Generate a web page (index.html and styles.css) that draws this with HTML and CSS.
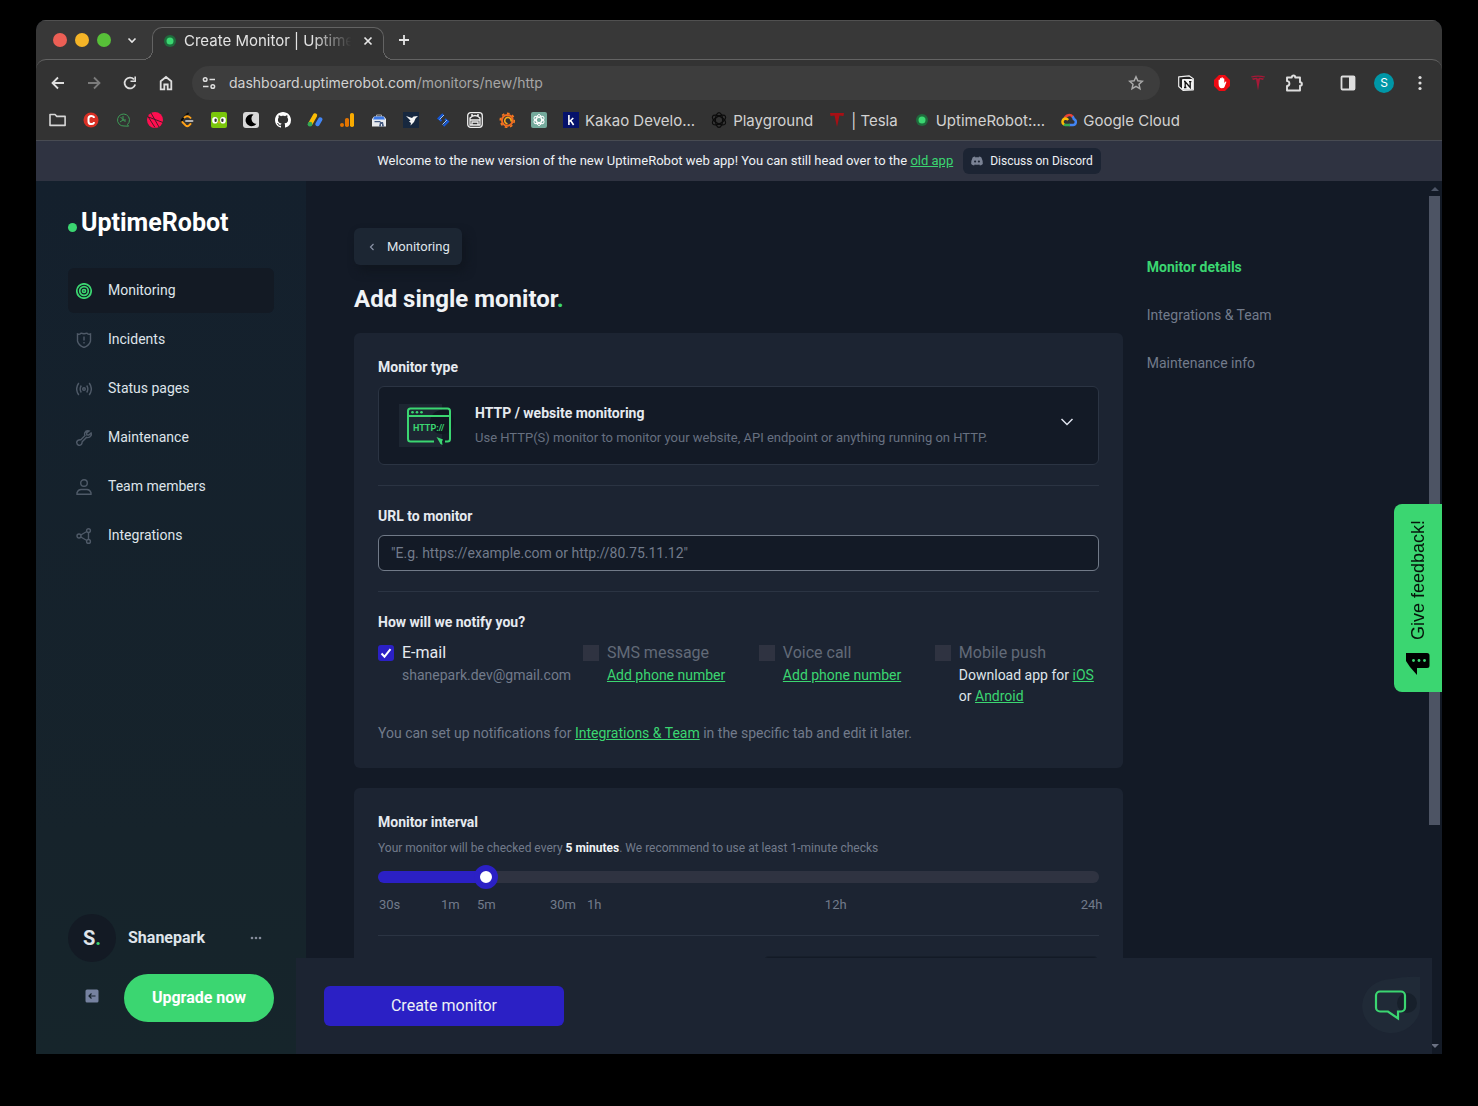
FILE: index.html
```html
<!DOCTYPE html>
<html lang="en">
<head>
<meta charset="utf-8">
<meta name="viewport" content="width=device-width, initial-scale=1">
<title>Create Monitor | UptimeRobot</title>
<link rel="stylesheet" href="styles.css">
</head>
<body>
<div class="window">
  <header class="chrome">
    <div class="tabstrip">
      <div class="lights"><span class="light light-red"></span><span class="light light-yellow"></span><span class="light light-green"></span></div>
      <button class="icon-btn tab-search" aria-label="Search tabs"><svg width="12" height="12" viewBox="0 0 12 12"><path d="M2.500 4.500 6 8l3.500-3.500" fill="none" stroke="#e6e6e6" stroke-width="1.600"/></svg></button>
      <div class="tab">
        <svg width="16" height="16" viewBox="0 0 16 16"><circle cx="8" cy="8" r="6" fill="#1f6b3c"/><circle cx="8" cy="8" r="3.500" fill="#3bd671"/></svg>
        <span class="tab-title">Create Monitor | Uptime</span>
        <button class="icon-btn tab-close" aria-label="Close tab"><svg width="12" height="12" viewBox="0 0 12 12"><path d="M2.500 2.500l7 7m0-7l-7 7" stroke="#e6e6e6" stroke-width="1.700"/></svg></button>
      </div>
      <button class="icon-btn new-tab" aria-label="New tab"><svg width="14" height="14" viewBox="0 0 14 14"><path d="M7 2v10M2 7h10" stroke="#e6e6e6" stroke-width="1.800"/></svg></button>
    </div>

    <div class="toolbar">
      <button class="icon-btn slot" aria-label="Back"><svg width="16" height="16" viewBox="0 0 16 16"><path d="M14 8H3M8 2.500 2.500 8 8 13.500" fill="none" stroke="#dedede" stroke-width="1.800"/></svg></button>
      <button class="icon-btn slot" aria-label="Forward"><svg width="16" height="16" viewBox="0 0 16 16"><path d="M2 8h11M8 2.500 13.500 8 8 13.500" fill="none" stroke="#7b7b7b" stroke-width="1.800"/></svg></button>
      <button class="icon-btn slot" aria-label="Reload"><svg width="16" height="16" viewBox="0 0 16 16"><path d="M13.200 9.500A5.400 5.400 0 1 1 12 4.400" fill="none" stroke="#dedede" stroke-width="1.800"/><path d="M14 1.500V7H8.500V5.400h3.900V1.500z" fill="#dedede"/></svg></button>
      <button class="icon-btn slot" aria-label="Home"><svg width="16" height="16" viewBox="0 0 16 16"><path d="M2.700 6.200 8 2l5.300 4.200v8.100H9.700V9.500H6.300v4.800H2.700z" fill="none" stroke="#dedede" stroke-width="1.800"/></svg></button>
      <div class="omnibox">
        <svg width="14" height="14" viewBox="0 0 14 14" fill="none" stroke="#dedede" stroke-width="1.500"><circle cx="3.200" cy="3.500" r="1.800"/><path d="M7.500 3.500H13M1 10.500h5.500"/><circle cx="10.800" cy="10.500" r="1.800"/></svg>
        <span class="url">dashboard.uptimerobot.com<span class="url-path">/monitors/new/http</span></span>
        <svg width="16" height="16" viewBox="0 0 16 16"><path d="M8 1.800l1.850 4.050 4.450.45-3.300 3 .95 4.350L8 11.400l-3.950 2.250L5 9.300 1.700 6.300l4.450-.45z" fill="none" stroke="#a9a9a9" stroke-width="1.500"/></svg>
      </div>
      <button class="icon-btn slot" aria-label="Notion"><svg width="16" height="16" viewBox="0 0 16 16"><path d="M0.700 1.800 11 .8l4.300 3v11L5 15.300.7 11.500z" fill="#222" stroke="#eee" stroke-width="1.200" stroke-linejoin="round"/><rect x="4" y="4" width="11" height="10.800" rx="1" fill="#f4f4f4"/><path d="M7.200 12.500V6.800l5 5.700V6.500M6 12.500h2.400M6 6.700h1.700M11 6.700h2.400" fill="none" stroke="#111" stroke-width="1.300"/></svg></button>
      <button class="icon-btn slot" aria-label="Ad blocker"><svg width="16" height="16" viewBox="0 0 16 16"><path d="M5 0h6l5 5v6l-5 5H5l-5-5V5z" fill="#ee0a12"/><path d="M4.600 8.500V5.200a.7.700 0 0 1 1.400 0V3.600a.7.700 0 0 1 1.400 0V3a.7.700 0 0 1 1.500 0v1a.7.700 0 0 1 1.400 0v4l1-1.300c.6-.5 1.300 0 1 .6L10.500 12c-.5.800-1.300 1.200-2.500 1.200-2.400 0-3.400-1.500-3.400-4.700z" fill="#fff"/></svg></button>
      <button class="icon-btn slot" aria-label="Tesla"><svg width="16" height="16" viewBox="0 0 16 16" fill="#a51937"><path d="M1 1.500q7-2 14 0L14.500 2.600Q8 .9 1.500 2.600zM2 3.500q3-.9 5-.7L8 4l1-1.200q2-.2 5 .7l-1 1.400-3-.6L8 15.500 6 4.300l-3 .6z"/></svg></button>
      <button class="icon-btn slot" aria-label="Extensions"><svg width="18" height="18" viewBox="0 0 18 18"><path d="M2 3.500h4.800V3.200a1.700 1.700 0 0 1 3.400 0v.3H15v4.800h.2a1.700 1.700 0 0 1 0 3.400H15v4.800H2v-4.600a2.400 2.400 0 0 0 0-4.800z" fill="none" stroke="#dedede" stroke-width="1.900" stroke-linejoin="round"/></svg></button>
      <button class="icon-btn slot panel-btn" aria-label="Side panel"><svg width="16" height="16" viewBox="0 0 16 16"><rect x="1.500" y="1.500" width="13" height="13" rx="1" fill="none" stroke="#dedede" stroke-width="1.800"/><path d="M9 1.500h5.500v13H9z" fill="#dedede"/></svg></button>
      <button class="icon-btn slot" aria-label="Profile"><span class="profile">S</span></button>
      <button class="icon-btn slot" aria-label="Menu"><svg width="16" height="16" viewBox="0 0 16 16" fill="#dedede"><circle cx="8" cy="2.500" r="1.600"/><circle cx="8" cy="8" r="1.600"/><circle cx="8" cy="13.500" r="1.600"/></svg></button>
    </div>

    <nav class="bookmarks" aria-label="Bookmarks">
      <a href="#" aria-label="Folder"><svg width="18" height="16" viewBox="0 0 18 16"><path d="M1 2.500h5l1.800 1.900h8.300v9H1z" fill="none" stroke="#d6d6d6" stroke-width="1.600" stroke-linejoin="round"/></svg></a>
      <a href="#" aria-label="C"><svg width="16" height="16" viewBox="0 0 16 16"><circle cx="8" cy="8" r="7.500" fill="#d93025"/><path d="M10.800 6V4.900q-.5-1-2.600-1-2.700 0-2.700 2.700v2.800q0 2.700 2.700 2.700 2.100 0 2.600-1V10" fill="none" stroke="#fff" stroke-width="2"/></svg></a>
      <a href="#" aria-label="Search"><svg width="16" height="16" viewBox="0 0 16 16" fill="none" stroke="#3f9a57"><path d="M12.500 12.500A6 6 0 1 0 9 14l4.500.200z"/><path d="M5.500 5l5 5M8 4v4l-3 2M8 8h3"/></svg></a>
      <a href="#" aria-label="Ball"><svg width="16" height="16" viewBox="0 0 16 16"><circle cx="8" cy="8" r="8" fill="#ff0f50"/><path d="M0 4.500l16 6M4 1l8 14M1 4.500l7 11" stroke="#4a1a28" stroke-width="1" fill="none"/></svg></a>
      <a href="#" aria-label="LeetCode"><svg width="16" height="16" viewBox="0 0 16 16" fill="none" stroke-width="1.900" stroke-linecap="round"><path d="M9 1.500 3.300 7.200q-1.300 1.400 0 2.800" stroke="#0b0b0b"/><path d="M3.300 10l3.400 3.500q1.600 1.300 3.200 0l1.600-1.500M5.500 5.500q3-2.500 6 .4" stroke="#ffa116"/><path d="M7 9h6.500" stroke="#b3b3b3"/></svg></a>
      <a href="#" aria-label="Duolingo"><svg width="16" height="16" viewBox="0 0 16 16"><rect width="16" height="16" rx="2" fill="#7ac70c"/><rect x="1.200" y="5" width="5.600" height="6.500" rx="2.800" fill="#fff"/><rect x="9.200" y="5" width="5.600" height="6.500" rx="2.800" fill="#fff"/><rect x="3.500" y="6.500" width="2.200" height="3.500" rx="1" fill="#333"/><rect x="10.300" y="6.500" width="2.200" height="3.500" rx="1" fill="#333"/><path d="M6.800 9.500h2.400L8 12z" fill="#f9a01b"/></svg></a>
      <a href="#" aria-label="Moon"><svg width="16" height="16" viewBox="0 0 16 16"><rect width="16" height="16" rx="3" fill="#d8d8d8"/><path d="M10.500 2.500a6 6 0 1 0 2.900 9.300 5.200 5.200 0 0 1-2.900-9.300z" fill="#000"/></svg></a>
      <a href="#" aria-label="GitHub"><svg width="16" height="16" viewBox="0 0 16 16"><path fill="#fff" d="M8 0C3.580 0 0 3.580 0 8c0 3.540 2.290 6.530 5.470 7.590.4.070.55-.17.55-.38 0-.19-.01-.82-.01-1.490-2.010.37-2.530-.49-2.690-.94-.09-.23-.48-.94-.82-1.130-.28-.15-.68-.52-.01-.53.630-.01 1.080.58 1.230.82.720 1.210 1.870.87 2.330.66.070-.52.280-.87.510-1.070-1.780-.2-3.640-.89-3.640-3.950 0-.87.310-1.590.82-2.150-.08-.2-.36-1.020.08-2.120 0 0 .67-.21 2.200.82.640-.18 1.320-.27 2-.27s1.360.09 2 .27c1.530-1.040 2.200-.82 2.200-.82.440 1.100.16 1.920.08 2.120.51.560.82 1.270.82 2.150 0 3.070-1.870 3.750-3.650 3.950.29.250.54.730.54 1.480 0 1.070-.01 1.930-.01 2.200 0 .21.150.46.55.38A8.010 8.010 0 0 0 16 8c0-4.420-3.580-8-8-8z"/></svg></a>
      <a href="#" aria-label="AdSense"><svg width="16" height="16" viewBox="0 0 16 16" fill="none" stroke-width="4.400" stroke-linecap="round"><path d="M8 3.500 3.500 11.500" stroke="#fbbc04"/><path d="M3 12.200v.01" stroke="#34a853" stroke-width="4.800"/><path d="M13.200 7.500 10.600 12" stroke="#4285f4"/></svg></a>
      <a href="#" aria-label="Analytics"><svg width="16" height="16" viewBox="0 0 16 16"><rect x="11" y="1" width="4" height="14" rx="1.800" fill="#f9ab00"/><rect x="6" y="6" width="4" height="9" rx="1.800" fill="#e37400"/><circle cx="3" cy="13" r="2" fill="#e37400"/></svg></a>
      <a href="#" aria-label="Search Console"><svg width="16" height="16" viewBox="0 0 16 16"><path d="M5.500 3h5v2h-5z" fill="none" stroke="#aaa"/><path d="M1 7l2-2.500h10L15 7v7.500H1z" fill="#e8eaed"/><path d="M3.500 4.500h9l1.500 3H2z" fill="#3b78e7"/><path d="M3.500 9h6v1.200h-6zM9 10h3l1 4.500h-2V12h-1v2.500H8z" fill="#455a80"/></svg></a>
      <a href="#" aria-label="Bird"><svg width="16" height="16" viewBox="0 0 16 16"><rect width="16" height="16" fill="#17283f"/><path d="M3 4l6 2 1.500-1.500L15 4l-2.500 2.500L11 10l-3.500 3.500L8 11l-2-1.500 1.500-1z" fill="#f5f5f5"/></svg></a>
      <a href="#" aria-label="Strokes"><svg width="16" height="16" viewBox="0 0 16 16" stroke-width="2" fill="none"><path d="M8 2 3.500 6.500 6.500 9M8.500 14l4.500-4.500L10 7" stroke="#1557d6"/><path d="M4.500 7.500 9 3M7.500 12.500 12 8" stroke="#9cc8ff" stroke-width="1"/></svg></a>
      <a href="#" aria-label="Robot"><svg width="16" height="16" viewBox="0 0 16 16" fill="none" stroke="#eee" stroke-width="1.300"><rect x=".7" y=".7" width="14.600" height="14.600" rx="3"/><path d="M3 6q5-5 10 0v7H3zM3 8h10M5 13v-3h6v3M4 3h2M10 3h2"/></svg></a>
      <a href="#" aria-label="Grafana"><svg width="16" height="16" viewBox="0 0 16 16" fill="none"><circle cx="8.300" cy="8.300" r="5.400" stroke="#f26a21" stroke-width="2"/><circle cx="8.300" cy="8.300" r="7" stroke="#f47a20" stroke-width="1.600" stroke-dasharray="2.700 2.700"/><path d="M12 9.500a3.200 3.200 0 1 0-3.500 2.300" stroke="#fba919" stroke-width="1.600"/></svg></a>
      <a href="#" aria-label="ChatGPT"><svg width="16" height="16" viewBox="0 0 16 16"><rect width="16" height="16" rx="2" fill="#74aa9c"/><g fill="none" stroke="#fff"><ellipse cx="8" cy="8" rx="2.600" ry="5.500"/><ellipse cx="8" cy="8" rx="2.600" ry="5.500" transform="rotate(60 8 8)"/><ellipse cx="8" cy="8" rx="2.600" ry="5.500" transform="rotate(120 8 8)"/></g></svg></a>
      <a href="#"><svg width="16" height="16" viewBox="0 0 16 16"><rect width="16" height="16" fill="#06126b"/><path d="M5.900 3v10M10.300 6 6.500 9.500M7.600 8.500l3 4.500" stroke="#fff" stroke-width="1.600"/></svg>Kakao Develo...</a>
      <a href="#"><svg width="16" height="16" viewBox="0 0 16 16" fill="none" stroke="#0c0c0c" stroke-width="1.200"><ellipse cx="8" cy="8" rx="3.600" ry="7.400"/><ellipse cx="8" cy="8" rx="3.600" ry="7.400" transform="rotate(60 8 8)"/><ellipse cx="8" cy="8" rx="3.600" ry="7.400" transform="rotate(120 8 8)"/></svg>Playground</a>
      <a href="#"><svg width="16" height="16" viewBox="0 0 16 16" fill="#a80f14"><path d="M1 1h14l-.5 3-4-.5L8 15 5.500 3.500l-4 .5z"/></svg>| Tesla</a>
      <a href="#"><svg width="16" height="16" viewBox="0 0 16 16"><circle cx="8" cy="8" r="6" fill="#1f6b3c"/><circle cx="8" cy="8" r="3.500" fill="#3bd671"/></svg>UptimeRobot:...</a>
      <a href="#"><svg width="16" height="16" viewBox="0 0 16 16" fill="none" stroke-width="2.500"><path d="M3.800 6.500a4.500 4.500 0 0 1 8-1.500" stroke="#ea4335"/><path d="M11.500 4.500q1 1 1.300 2.500a3.100 3.100 0 0 1-.8 6H8.500" stroke="#4285f4"/><path d="M9 13H4.500q-1 0-1.900-.7" stroke="#34a853"/><path d="M3 12.500A3.200 3.200 0 0 1 4.500 6.600q1.500 0 2.600 1.400" stroke="#fbbc05"/></svg>Google Cloud</a>
    </nav>
  </header>

  <div class="page">
    <div class="banner">
      <span>Welcome to the new version of the new UptimeRobot web app! You can still head over to the <a class="link" href="#">old app</a></span>
      <a class="discord" href="#"><svg width="12" height="10" viewBox="0 0 12 10"><path d="M4.200.5 3.900 1.200h4.200L7.800.5q1.600.2 2.600.9Q12 4.500 11.800 8q-1.200 1.200-2.900 1.400l-.6-1q-2.300.6-4.600 0l-.6 1Q1.400 9.200.2 8 0 4.500 1.600 1.400 2.700.7 4.200.5z" fill="#7a8294"/><circle cx="4.100" cy="5.500" r="1.100" fill="#1c2433"/><circle cx="7.900" cy="5.500" r="1.100" fill="#1c2433"/></svg>Discuss on Discord</a>
    </div>

    <div class="app">
      <aside class="sidebar">
        <div class="logo"><span class="logo-dot"></span>UptimeRobot</div>
        <nav class="menu">
          <a class="menu-item active" href="#"><svg width="16" height="16" viewBox="0 0 16 16"><circle cx="8" cy="8" r="7.200"/><circle cx="8" cy="8" r="4.300"/><circle cx="8" cy="8" r="1.500"/></svg>Monitoring</a>
          <a class="menu-item" href="#"><svg width="16" height="16" viewBox="0 0 16 16"><path d="M1.500 2q2 .8 3.500-.8 3 1 6 0 1.500 1.600 3.500.8v7q-1 4.500-6.500 6.500-5.500-2-6.500-6.500zM8 4.500v4M8 10v1.500"/></svg>Incidents</a>
          <a class="menu-item" href="#"><svg width="16" height="16" viewBox="0 0 16 16"><circle cx="8" cy="8" r="1.300"/><path d="M5.300 4.500q-2.300 3.500 0 7M10.700 4.500q2.300 3.500 0 7M2.800 2q-4.300 6 0 12M13.200 2q4.300 6 0 12"/></svg>Status pages</a>
          <a class="menu-item" href="#"><svg width="16" height="16" viewBox="0 0 16 16"><path d="M13 1q-3-.8-4.200 1.800-.5 1.500.2 2.700L4.800 9.800Q1.500 9.500.7 12q-.2 2.800 2.300 3.400 3-.2 3.200-3.700l4.300-4.300q3 .8 4.500-1.700.6-1.500.1-2.700L12.800 5l-2-.2-.2-1.900z"/></svg>Maintenance</a>
          <a class="menu-item" href="#"><svg width="16" height="16" viewBox="0 0 16 16"><circle cx="8" cy="4" r="3.300"/><path d="M1 15.300v-1.500q1-3.300 4-3.300h6q3 0 4 3.300v1.500z"/></svg>Team members</a>
          <a class="menu-item" href="#"><svg width="16" height="16" viewBox="0 0 16 16"><circle cx="3" cy="8" r="2"/><circle cx="12.500" cy="2.600" r="1.900"/><circle cx="12.500" cy="13.400" r="1.900"/><path d="M4.800 7 10.800 3.500M4.800 9l6 3.500M12.500 4.500v7"/></svg>Integrations</a>
        </nav>
        <div class="account">
          <div class="user">
            <span class="avatar">S<span class="green">.</span></span>
            <span class="user-name">Shanepark</span>
            <button class="icon-btn" aria-label="Account menu"><svg width="12" height="4" viewBox="0 0 12 4" fill="#858c9b"><circle cx="2" cy="2" r="1.300"/><circle cx="6" cy="2" r="1.300"/><circle cx="10" cy="2" r="1.300"/></svg></button>
          </div>
          <div class="actions">
            <button class="icon-btn collapse" aria-label="Collapse sidebar"><svg width="14" height="14" viewBox="0 0 14 14"><rect x=".5" y=".5" width="13" height="13" rx="1.500" fill="#7682a0"/><path d="M10.500 7h-6M6.500 4.500 4 7l2.500 2.500" fill="none" stroke="#16232c" stroke-width="1.200"/></svg></button>
            <button class="upgrade">Upgrade now</button>
          </div>
        </div>
      </aside>

      <div class="workspace">
        <main class="content">
          <section class="form-col">
            <a class="back" href="#"><svg width="6" height="8" viewBox="0 0 6 8"><path d="M4.500 1 1.500 4l3 3" fill="none" stroke="#8b93a7" stroke-width="1.200"/></svg>Monitoring</a>
            <h1>Add single monitor<span class="green">.</span></h1>

            <form class="card">
              <label class="field-label" for="type">Monitor type</label>
              <div class="type-box">
                <svg width="56" height="44" viewBox="0 0 56 44">
                  <rect width="43" height="43" fill="#1d2632"/><circle cx="43" cy="18" r="12" fill="#101721"/>
                  <g fill="none" stroke="#3bd671" stroke-width="2"><path d="M35 37.500H11.500a2.500 2.500 0 0 1-2.500-2.500V7A2.500 2.500 0 0 1 11.500 4.500h37A2.500 2.500 0 0 1 51 7V35a2.500 2.500 0 0 1-2.500 2.500H46M9 12h42"/></g>
                  <g fill="#3bd671"><circle cx="13.500" cy="8.300" r="1.300"/><circle cx="18" cy="8.300" r="1.300"/><circle cx="22.500" cy="8.300" r="1.300"/><path d="M37.500 33l6.500 2.500-1 2 .5 3.500-2-1z"/></g>
                  <text class="http-text" x="14" y="27">HTTP://</text>
                </svg>
                <div class="type-text">
                  <select id="type"><option>HTTP / website monitoring</option></select>
                  <p>Use HTTP(S) monitor to monitor your website, API endpoint or anything running on HTTP.</p>
                </div>
                <svg class="chevron" width="14" height="8" viewBox="0 0 14 8"><path d="M1.500 1 7 6.500 12.500 1" fill="none" stroke="#dfe3ee" stroke-width="1.500"/></svg>
              </div>
              <hr>
              <label class="field-label" for="url">URL to monitor</label>
              <input class="url-input" id="url" type="text" placeholder="&quot;E.g. https://example.com or http://80.75.11.12&quot;">
              <hr>
              <div class="field-label">How will we notify you?</div>
              <div class="channels">
                <div>
                  <label class="channel on"><input type="checkbox" checked>E-mail</label>
                  <p class="channel-note muted">shanepark.dev@gmail.com</p>
                </div>
                <div>
                  <label class="channel"><input type="checkbox" disabled>SMS message</label>
                  <p class="channel-note"><a class="link" href="#">Add phone number</a></p>
                </div>
                <div>
                  <label class="channel"><input type="checkbox" disabled>Voice call</label>
                  <p class="channel-note"><a class="link" href="#">Add phone number</a></p>
                </div>
                <div>
                  <label class="channel"><input type="checkbox" disabled>Mobile push</label>
                  <p class="channel-note">Download app for <a class="link" href="#">iOS</a> or <a class="link" href="#">Android</a></p>
                </div>
              </div>
              <p class="note muted">You can set up notifications for <a class="link" href="#">Integrations &amp; Team</a> in the specific tab and edit it later.</p>
            </form>

            <form class="card">
              <label class="field-label" for="interval">Monitor interval</label>
              <p class="hint muted">Your monitor will be checked every <strong>5 minutes</strong>. We recommend to use at least 1-minute checks</p>
              <input class="slider" id="interval" type="range" min="0" max="1000" value="138">
              <div class="ticks"><span>30s</span><span>1m</span><span>5m</span><span>30m</span><span>1h</span><span>12h</span><span>24h</span></div>
              <hr>
              <div class="split"><span></span><input class="dark-input" type="text" aria-label="Monitor group"></div>
            </form>
          </section>

          <nav class="toc">
            <a class="current" href="#">Monitor details</a>
            <a href="#">Integrations &amp; Team</a>
            <a href="#">Maintenance info</a>
          </nav>
        </main>

        <footer class="footer">
          <button class="create">Create monitor</button>
          <button class="icon-btn chat" aria-label="Chat"><svg width="60" height="60" viewBox="0 0 60 60"><path d="M58 1v32A29 27 0 1 1 30 3q14-3 28-2z" fill="#202a37"/><circle cx="45" cy="27" r="10" fill="#17202b"/><path d="M18 15.500h21a4 4 0 0 1 4 4v12a4 4 0 0 1-4 4h-3v7l-10-7h-8a4 4 0 0 1-4-4V19.500a4 4 0 0 1 4-4z" fill="none" stroke="#3bd671" stroke-width="2.200"/></svg></button>
        </footer>
      </div>

      <div class="scrollbar" aria-hidden="true"><span class="arrow-up"></span><span class="thumb"></span><span class="arrow-down"></span></div>
    </div>

    <button class="feedback"><svg width="24" height="24" viewBox="0 0 24 24"><path d="M3 1h18a2.500 2.500 0 0 1 2.500 2.500v10A2.500 2.500 0 0 1 21 16H11v7L4 15 0 9V1z" fill="#000"/><g fill="#3bd671"><circle cx="7.500" cy="8.500" r="1.400"/><circle cx="13" cy="8.500" r="1.400"/><circle cx="18.500" cy="8.500" r="1.400"/></g></svg><span>Give feedback!</span></button>
  </div>
</div>
</body>
</html>
```
FILE: styles.css
```css
* { box-sizing: border-box; }

body {
  margin: 0;
  padding: 20px 36px 52px;
  min-height: 100vh;
  background: #000;
  font-family: Roboto, "Liberation Sans", sans-serif;
  font-size: 14px;
  color: #dfe4ea;
}

h1, p { margin: 0; }
a { color: inherit; text-decoration: none; }
svg { display: block; flex: none; }
button, input, select { font-family: inherit; }

.icon-btn {
  display: flex;
  align-items: center;
  justify-content: center;
  padding: 0;
  border: 0;
  background: none;
}

.green { color: #3bd671; }
.muted { color: #727b8b; }
.link { color: #3bd671; text-decoration: underline; }

.window {
  display: flex;
  flex-direction: column;
  height: calc(100vh - 72px);
  border-radius: 10px 10px 0 0;
  overflow: hidden;
  background: #131a26;
}

/* Browser chrome */
.chrome {
  background: #383838;
  border-top: 1px solid #505050;
  font-family: Inter, "Liberation Sans", sans-serif;
  color: #d2d2d2;
}

.tabstrip { display: flex; height: 38px; padding-left: 17px; }
.lights { display: flex; align-items: center; gap: 8px; }
.light { width: 14px; height: 14px; border-radius: 50%; }
.light-red { background: #ec5f55; }
.light-yellow { background: #f4b427; }
.light-green { background: #57c038; }
.tab-search { width: 42px; }

.tab {
  position: relative;
  z-index: 1;
  display: flex;
  align-items: center;
  gap: 6px;
  width: 232px;
  margin: 6px 0 -1px -1px;
  padding: 0 8px 7px 9px;
  background: #333;
  border: 1px solid #636363;
  border-bottom: 0;
  border-radius: 10px 10px 0 0;
  color: #e3e3e3;
}
.tab::before, .tab::after {
  content: "";
  position: absolute;
  bottom: 0;
  width: 10px;
  height: 10px;
}
.tab::before { left: -10px; background: radial-gradient(circle at 0 0, #383838 9px, #636363 9px 10px, #333 10px); }
.tab::after { right: -10px; background: radial-gradient(circle at 100% 0, #383838 9px, #636363 9px 10px, #333 10px); }
.tab-title {
  flex: 1;
  white-space: nowrap;
  font-size: 15px;
  line-height: 20px;
  -webkit-mask-image: linear-gradient(90deg, #000 75%, transparent 98%);
  mask-image: linear-gradient(90deg, #000 75%, transparent 98%);
}
.tab-close { width: 14px; }
.new-tab { width: 40px; }

.toolbar {
  display: flex;
  align-items: center;
  height: 47px;
  padding: 0 4px;
  background: #333;
  border-top: 1px solid #636363;
  border-radius: 10px 10px 0 0;
}
.slot { width: 36px; height: 36px; }
.panel-btn { margin-left: 18px; }
.omnibox {
  flex: 1;
  display: flex;
  align-items: center;
  gap: 13px;
  height: 34px;
  margin: 0 8px;
  padding: 0 16px 0 10px;
  border-radius: 17px;
  background: #3d3d3d;
  font-size: 14px;
}
.url { flex: 1; padding-bottom: 2px; }
.url-path { color: #a6a6a6; }
.profile {
  width: 20px;
  height: 20px;
  border-radius: 50%;
  background: #0097a7;
  color: #fff;
  font-size: 12px;
  line-height: 20px;
}
.bookmarks {
  display: flex;
  align-items: center;
  gap: 16px;
  height: 35px;
  padding: 0 13px 6px;
  background: #333;
  border-bottom: 1px solid #484b52;
  font-size: 15px;
  white-space: nowrap;
}
.bookmarks a { display: flex; align-items: center; gap: 6px; }

/* Page */
.page { position: relative; flex: 1; min-height: 0; display: flex; flex-direction: column; }
.banner {
  display: flex;
  align-items: center;
  justify-content: center;
  gap: 10px;
  height: 40px;
  background: #2f3341;
  color: #eef1f5;
  font-size: 13px;
}
.banner > span { padding-bottom: 2px; }
.discord {
  display: flex;
  align-items: center;
  gap: 7px;
  height: 26px;
  padding: 0 8px;
  border-radius: 6px;
  background: #1c2433;
  font-size: 12px;
}
.app { flex: 1; min-height: 0; display: flex; }

/* Sidebar */
.sidebar {
  display: flex;
  flex-direction: column;
  flex: none;
  width: 270px;
  padding: 28px 32px 32px;
  background: linear-gradient(#14202d, #16232b 75%, #16252b);
}
.logo {
  display: flex;
  align-items: center;
  gap: 4px;
  margin-bottom: 31px;
  color: #fff;
  font-size: 25px;
  font-weight: 700;
  line-height: 28px;
}
.logo-dot { width: 9px; height: 9px; margin-top: 8px; border-radius: 50%; background: #3bd671; }
.menu { display: flex; flex-direction: column; gap: 4px; }
.menu-item {
  display: flex;
  align-items: center;
  gap: 16px;
  height: 45px;
  padding: 0 8px 2px;
  border-radius: 6px;
}
.menu-item svg { margin-top: 2px; fill: none; stroke: #4f5a68; stroke-width: 1.4px; }
.menu-item.active { background: #131a24; }
.menu-item.active svg { stroke: #3bd671; stroke-width: 1.7px; }
.account { display: flex; flex-direction: column; gap: 12px; margin-top: auto; }
.user { display: flex; align-items: center; gap: 12px; padding-right: 12px; }
.avatar {
  width: 48px;
  height: 48px;
  border-radius: 50%;
  background: #131a24;
  font-size: 20px;
  font-weight: 700;
  line-height: 48px;
  text-align: center;
}
.user-name { flex: 1; padding-bottom: 2px; font-size: 16px; font-weight: 700; }
.actions { display: flex; justify-content: space-between; }
.collapse { width: 48px; height: 44px; }
.upgrade {
  width: 150px;
  height: 48px;
  padding: 0 0 2px;
  border: 0;
  border-radius: 24px;
  background: #3bd671;
  color: #fff;
  font-size: 16px;
  font-weight: 700;
}

/* Main area */
.workspace { flex: 1; min-width: 0; display: flex; flex-direction: column; }
.content {
  flex: 1;
  min-height: 0;
  overflow-y: auto;
  scrollbar-width: none;
  display: grid;
  grid-template-columns: 3fr 1fr;
  align-items: start;
  padding: 47px 50px 0 48px;
}
.form-col { display: flex; flex-direction: column; align-items: flex-start; min-width: 0; }
.back {
  display: flex;
  align-items: center;
  gap: 12px;
  height: 37px;
  padding: 0 12px 0 15px;
  border-radius: 6px;
  background: #1c2633;
  box-shadow: 4px 6px 10px #10161f;
  font-size: 13px;
}
h1 { margin: 20px 0; font-size: 24px; font-weight: 700; line-height: 28px; color: #f0f3f6; }
.card {
  display: flex;
  flex-direction: column;
  align-self: stretch;
  margin-bottom: 20px;
  padding: 24px;
  border-radius: 6px;
  background: #1c2432;
}
.field-label { margin-bottom: 9px; font-weight: 700; line-height: 20px; color: #e6eaf0; }
hr { width: 100%; height: 1px; margin: 20px 0; border: 0; background: #2b3443; }

.type-box {
  display: flex;
  align-items: center;
  gap: 20px;
  height: 79px;
  padding: 0 24px 0 20px;
  border: 1px solid #2b3443;
  border-radius: 6px;
  background: #131a26;
}
.http-text { font-size: 9px; font-weight: 700; fill: #3bd671; }
.type-text { flex: 1; }
.type-text select {
  display: block;
  width: 100%;
  height: 24px;
  padding: 0 0 2px;
  border: 0;
  appearance: none;
  background: none;
  color: #e6eaf0;
  font-size: 14px;
  font-weight: 700;
}
.type-text p { font-size: 13px; line-height: 24px; color: #677080; }
.chevron { margin-bottom: 7px; }

.url-input {
  height: 36px;
  padding: 0 12px;
  border: 1px solid #717a88;
  border-radius: 6px;
  background: #131a26;
  color: #e6eaf0;
  font-size: 14px;
}
.url-input::placeholder { color: #727b8b; }

.channels { display: grid; grid-template-columns: 205fr 176fr 176fr 164fr; }
.channel { display: flex; align-items: center; gap: 8px; font-size: 16px; line-height: 24px; color: #626a78; }
.channel.on { color: #e6eaf0; }
.channel input { appearance: none; width: 16px; height: 16px; margin: 0; background: #2f3341; }
.channel input:checked {
  border-radius: 3px;
  background: #2b20c5 url("data:image/svg+xml,%3Csvg xmlns='http://www.w3.org/2000/svg' viewBox='0 0 16 16'%3E%3Cpath d='M3.500 8.500l3 3.200 6-7.500' fill='none' stroke='white' stroke-width='2'/%3E%3C/svg%3E");
}
.channel-note { padding-left: 24px; line-height: 21px; }
.note { margin-top: 16px; line-height: 21px; }

.hint { margin: -3px 0 7px; font-size: 12px; line-height: 20px; }
.hint strong { color: #f0f3f6; }
.slider {
  appearance: none;
  width: 100%;
  height: 24px;
  margin: 0;
  background: none;
}
.slider::-webkit-slider-runnable-track {
  height: 12px;
  border-radius: 6px;
  background: linear-gradient(90deg, #2b20c5 15%, #2f3341 15%);
}
.slider::-webkit-slider-thumb {
  appearance: none;
  width: 24px;
  height: 24px;
  margin-top: -6px;
  border: 6px solid #2b20c5;
  border-radius: 50%;
  background: #fff;
}
.ticks {
  display: grid;
  grid-template-columns: 62fr 36fr 73fr 37fr 238fr 256fr 18fr;
  margin-top: 6px;
  padding-left: 1px;
  color: #727b8b;
  font-size: 13px;
  line-height: 20px;
}
.ticks span { width: 0; white-space: nowrap; }
.split { display: grid; grid-template-columns: 385px 1fr; }
.dark-input { height: 36px; min-width: 0; border: 1px solid #171f2b; border-radius: 6px; background: #131a26; }

.toc {
  display: flex;
  flex-direction: column;
  gap: 28px;
  padding: 29px 0 0 24px;
  line-height: 20px;
  color: #727b8b;
}
.toc .current { color: #3bd671; font-weight: 700; }

.footer {
  position: relative;
  display: flex;
  align-items: center;
  justify-content: space-between;
  height: 96px;
  margin: 0 -3px 0 -10px;
  padding: 0 10px 0 28px;
  background: #1c2432;
}
.create {
  width: 240px;
  height: 40px;
  padding: 0 0 2px;
  border: 0;
  border-radius: 6px;
  background: #2b20c5;
  color: #eef1f5;
  font-size: 16px;
}

.scrollbar {
  display: flex;
  flex-direction: column;
  flex: none;
  width: 13px;
  padding: 6px 2px 6px 0;
}
.arrow-up, .arrow-down { align-self: center; border: 4px solid transparent; }
.arrow-up { margin-bottom: 5px; border-top: 0; border-bottom-color: #4d5566; }
.arrow-down { margin-top: auto; border-bottom: 0; border-top-color: #6a7182; }
.thumb { height: 73%; background: #4d5464; }

.feedback {
  position: absolute;
  top: 50%;
  right: 0;
  display: flex;
  flex-direction: column-reverse;
  align-items: center;
  justify-content: space-between;
  width: 48px;
  height: 188px;
  margin-top: -94px;
  padding: 16px 0;
  border: 0;
  border-radius: 8px 0 0 8px;
  background: #3bd671;
  font-family: "Liberation Sans", sans-serif;
  font-size: 18px;
  color: #06140b;
}
.feedback span { writing-mode: vertical-rl; transform: rotate(180deg); }
```
